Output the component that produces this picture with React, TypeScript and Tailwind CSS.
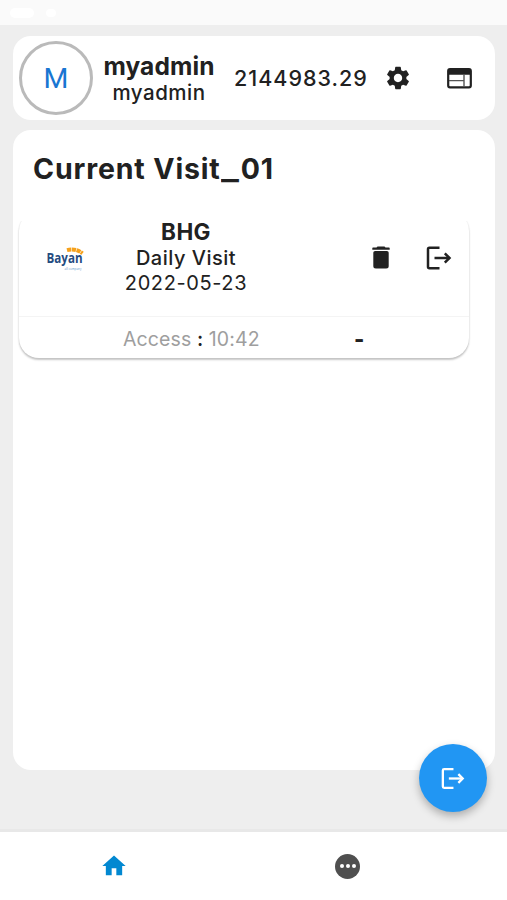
import type { ReactNode } from 'react'
import { MdHome, MdSettings } from 'react-icons/md'

function ExitIcon({ className }: { className?: string }) {
  return (
    <svg viewBox="0 0 26 24" fill="none" stroke="currentColor" strokeWidth="2.5" strokeLinejoin="round" className={className}>
      <path d="M13.5 1.8H3.4Q2 1.800 2 3.200v17.600q0 1.400 1.400 1.400h10.100" />
      <path d="M8.500 12h15" />
      <path d="m18.800 7.300 4.700 4.700-4.700 4.700" strokeLinejoin="miter" />
    </svg>
  )
}

function TrashIcon() {
  return (
    <svg viewBox="0 0 18 23" fill="currentColor" className="h-[23px] w-[18px]">
      <path d="M5.500.6h7l1 1H17a.7.7 0 0 1 .7.7v1.500H.3V2.300a.7.7 0 0 1 .7-.7h3.500z" />
      <path d="M1.300 6.800q0-1.800 1.800-1.800h11.800q1.800 0 1.800 1.800v13.200q0 2.500-2.500 2.500H3.800q-2.500 0-2.500-2.500z" />
    </svg>
  )
}

function LayoutIcon() {
  return (
    <svg viewBox="0 0 25 21" className="h-[21px] w-[25px]">
      <rect x="1.200" y="1.200" width="22.600" height="18.200" rx="1.800" fill="none" stroke="currentColor" strokeWidth="2.200" />
      <path d="M1 3q0-2 2-2h19q2 0 2 2v3.800H1z" fill="currentColor" />
      <path d="M2 12.600h14.500M17 6v13" stroke="#555555" strokeWidth="1.400" fill="none" />
    </svg>
  )
}

function BayanLogo() {
  return (
    <svg viewBox="0 0 40 26" className="h-[26px] w-10 overflow-visible">
      <path d="M20 5.100q9-2.200 15.500 3.300" fill="none" stroke="#f5a11c" strokeWidth="4" strokeDasharray="4.200 .6" />
      <text x="-0.500" y="17.800" fontSize="13.500" fontWeight="700" textLength="36" lengthAdjust="spacingAndGlyphs" fill="#254b80" fontFamily="'Open Sans', sans-serif">
        Bayan
      </text>
      <text x="17.500" y="24.500" fontSize="3.500" textLength="17" lengthAdjust="spacingAndGlyphs" fill="#5f9bcb" fontFamily="'Open Sans', sans-serif">
        all company
      </text>
    </svg>
  )
}

function Card({ className, children }: { className: string; children: ReactNode }) {
  return <section className={`mx-[13px] w-[482px] rounded-[18px] bg-white ${className}`}>{children}</section>
}

export default function App() {
  return (
    <div className="relative flex h-[900px] w-[507px] flex-col overflow-hidden bg-[#eeeeee] font-['Inter',sans-serif] text-[#212121]">
      {/* Status bar */}
      <div className="flex h-[25px] shrink-0 items-center gap-3 bg-[#fafafa] pl-2.5">
        <span className="h-2.5 w-6 rounded-full bg-white" />
        <span className="h-2 w-2.5 rounded-full bg-white" />
      </div>

      {/* Account */}
      <Card className="mt-[11px] flex h-[84px] shrink-0 items-center">
        <div className="ml-[6px] flex size-[74px] shrink-0 items-center justify-center rounded-full border-[3.500px] border-[#bababa] pt-0.5 font-['Roboto',sans-serif] text-[28.500px] leading-none text-[#1976d2]">
          M
        </div>
        <div className="ml-[9px] w-[114px] shrink-0 pt-[2px] text-center whitespace-nowrap">
          <div className="text-[24.500px] leading-[27px] font-bold tracking-[0.1px]">myadmin</div>
          <div className="text-[20.500px] leading-[26px] font-medium tracking-[0.5px]">myadmin</div>
        </div>
        <div className="ml-[18px] w-[136px] shrink-0 text-[21.500px] font-medium tracking-[1px]">2144983.29</div>
        <MdSettings className="ml-[14px] size-7 shrink-0" />
        <div className="ml-[35px]"><LayoutIcon /></div>
      </Card>

      {/* Visits */}
      <Card className="mt-[10px] h-[640px] shrink-0">
        <h1 className="pt-[21px] pl-5 text-[28.500px] leading-[36px] font-bold tracking-[0.85px]">
          Current Visit<span className="inline-block w-[20px] origin-left scale-x-[1.32]">_</span>01
        </h1>

        <article className="mt-[24px] ml-[6px] h-[147px] w-[450px] rounded-[20px] bg-white shadow-[0_2px_2px_rgba(0,0,0,0.22),0_0_2px_rgba(0,0,0,0.08)] [clip-path:inset(10px_-4px_-6px_-4px)]">
          <div className="flex h-[106px] border-b border-[#f4f4f4]">
            <div className="w-[92px] pt-[34px] pl-[28px]"><BayanLogo /></div>
            <div className="w-[150px] pt-[7px] text-center whitespace-nowrap">
              <div className="text-[22.500px] leading-[27px] font-bold tracking-[0.4px]">BHG</div>
              <div className="text-[20px] leading-[26px] font-medium tracking-[0.5px]">Daily Visit</div>
              <div className="text-[20px] leading-[24px] tracking-[0.6px]">2022-05-23</div>
            </div>
            <div className="flex flex-1 items-start pt-[35px] pl-[111px]">
              <TrashIcon />
              <ExitIcon className="ml-[36px] h-[24px] w-[26px]" />
            </div>
          </div>
          <div className="flex h-[41px] items-center pt-[4px] pl-[104px] text-[19.500px]">
            <div className="w-[231px] tracking-[0.1px] whitespace-nowrap text-[#9e9e9e]">
              Access <span className="font-semibold text-[#212121]">:</span> 10:42
            </div>
            <span className="text-[22px] font-extrabold">-</span>
          </div>
        </article>
      </Card>

      {/* Floating exit button */}
      <button className="absolute top-[744px] left-[419px] flex size-[68px] items-center justify-center rounded-full bg-[#2196f3] text-white shadow-[0_4px_8px_rgba(0,0,0,0.28)]">
        <ExitIcon className="h-[23px] w-[24px]" />
      </button>

      {/* Bottom navigation */}
      <nav className="mt-auto flex h-[71px] shrink-0 border-t-[3px] border-[#e8e8e8] bg-white">
        <a className="flex w-[228px] items-center justify-center text-[#0288d1]"><MdHome className="size-7" /></a>
        <a className="flex w-[239px] items-center justify-center">
          <span className="flex size-[25px] items-center justify-center gap-[2px] rounded-full bg-[#4f4f4f]">
            <i className="size-1 rounded-full bg-white" />
            <i className="size-1 rounded-full bg-white" />
            <i className="size-1 rounded-full bg-white" />
          </span>
        </a>
      </nav>
    </div>
  )
}
